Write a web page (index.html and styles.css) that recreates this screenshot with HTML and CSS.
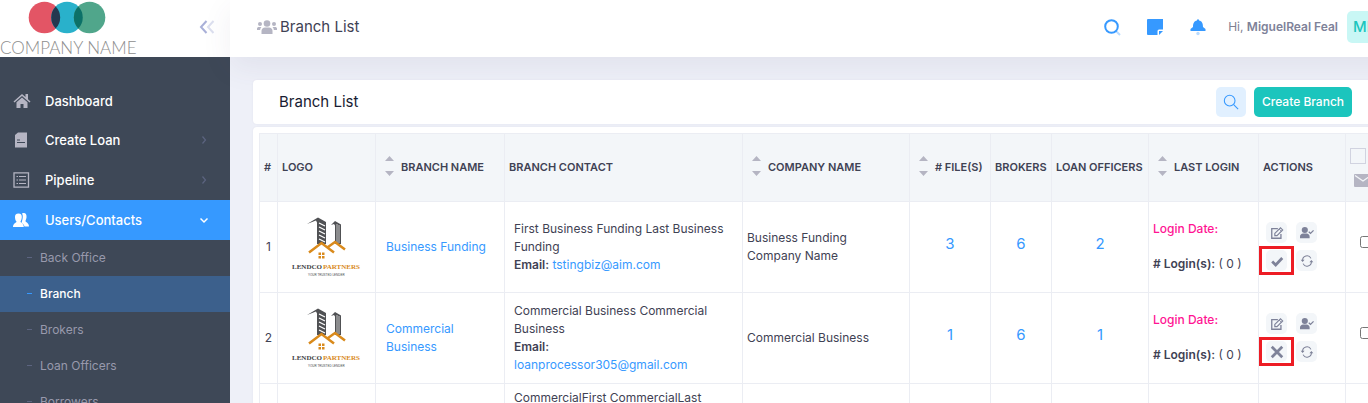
FILE: index.html
```html
<!DOCTYPE html>
<html lang="en">
<head>
<meta charset="utf-8">
<title>Branch List</title>
<link rel="stylesheet" href="styles.css">
</head>
<body>
<svg class="defs" aria-hidden="true">
  <symbol id="i-lendco" viewBox="0 0 88 80">
    <path d="M25 17 36 10.500 44 15V37H35V15.500L34 13.500Z" fill="#505154"/>
    <path d="M37 16l6 3M37 20l6 3M37 24l6 3M37 28l6 3M37 32l6 3" stroke="#fff" stroke-width="1.200"/>
    <path d="M49 18 53 14 59 17.500V37H53V18.500L52 17Z" fill="#505154"/>
    <path d="M55 17v19M57 18v18" stroke="#e6e6e6" stroke-width=".8"/>
    <path d="M27 45.500 39.500 36 52 45.500M46 40l7-5 10 7.500" fill="none" stroke="#d98a1c" stroke-width="2.500"/>
    <path d="M36.500 45.500h2.500v2.500h-2.500zM40 45.500h2.500v2.500H40zM36.500 49h2.500v2.500h-2.500zM40 49h2.500v2.500H40z" fill="#d98a1c"/>
    <text x="10" y="62" font-family="Liberation Serif, serif" font-weight="700" font-size="7" fill="#3d3e42">LENDCO<tspan dx="1" fill="#d98a1c">PARTNERS</tspan></text>
    <text x="26" y="69" font-family="Liberation Sans, sans-serif" font-size="3" fill="#44454a">YOUR TRUSTED LENDER</text>
  </symbol>
  <symbol id="i-edit" viewBox="0 0 16 16"><path d="M9 3H2v11h10.500V9" fill="none" stroke="currentColor" stroke-width="1.500"/><path d="M5.500 8.500 12 2l2.500 2.500L8 11H5.500z" fill="none" stroke="currentColor" stroke-width="1.300"/><path d="m10.500 3.500 2.500 2.500" stroke="currentColor"/></symbol>
  <symbol id="i-usercheck" viewBox="0 0 16 16"><circle cx="5.500" cy="4.500" r="3.500" fill="currentColor"/><path d="M0 14v-2c0-2 1.500-3.500 3.500-3.500h4c2 0 3.500 1.500 3.500 3.500v2z" fill="currentColor"/><path d="m10 6.500 2 2L15.500 5" fill="none" stroke="currentColor" stroke-width="1.500"/></symbol>
  <symbol id="i-check" viewBox="0 0 16 16"><path d="m2.500 8.500 4 4L14 4.500" fill="none" stroke="currentColor" stroke-width="3.200"/></symbol>
  <symbol id="i-cross" viewBox="0 0 16 16"><path d="m2 2 12 12M14 2l-12 12" fill="none" stroke="currentColor" stroke-width="3.200"/></symbol>
  <symbol id="i-sync" viewBox="0 0 16 16"><path d="M3 7.500A5 5 0 0 1 12.500 5M13 8.500A5 5 0 0 1 3.500 11" fill="none" stroke="currentColor" stroke-width="1.200"/><path d="M.8 6.500h4.400L3 9.200zM10.800 9.500h4.400L13 6.800z" fill="currentColor"/></symbol>
  <symbol id="i-sort" viewBox="0 0 9 22"><path d="M0 6 4.500 1 9 6zM0 16h9l-4.500 5z" fill="#b5b5c3"/></symbol>
  <symbol id="i-right" viewBox="0 0 8 8"><path d="m2.500.5 3 3.500-3 3.500" fill="none" stroke="currentColor" stroke-width="1.200"/></symbol>
</svg>
<div class="page">
  <aside class="sidebar">
    <div class="brand">
      <a class="brand-link" href="#">
        <svg class="brand-mark" viewBox="0 0 78 34" aria-hidden="true">
          <circle cx="16.500" cy="17.500" r="15.800" fill="#e35565"/><circle cx="39" cy="17.500" r="15.800" fill="#29b1cb"/><circle cx="61.500" cy="17.500" r="15.800" fill="#50a68b"/>
          <path d="M27.700 6.500a15.800 15.800 0 0 1 0 22 15.800 15.800 0 0 1 0-22z" fill="#24384f"/><path d="M50.300 6.500a15.800 15.800 0 0 1 0 22 15.800 15.800 0 0 1 0-22z" fill="#0c7168"/>
        </svg>
        <span class="brand-name">COMPANY NAME</span>
      </a>
      <button class="collapse" aria-label="Collapse menu"><svg viewBox="0 0 16 14"><path d="M7.500 1 2 7l5.500 6" fill="none" stroke="#a9b0d8" stroke-width="2"/><path d="M14.500 1 9 7l5.500 6" fill="none" stroke="#dcdfef" stroke-width="2"/></svg></button>
    </div>
    <nav class="menu">
      <a class="item" href="#"><svg class="item-icon" viewBox="0 0 18 16"><path d="M9 1 .5 8.500l1 1L9 3l7.500 6.500 1-1L15 6.200V1h-2.500v3zM9 4.500 3.500 9.200V15H7.500v-4h3v4h4V9.200z" fill="currentColor"/></svg><span>Dashboard</span></a>
      <a class="item" href="#"><svg class="item-icon" viewBox="0 0 18 16"><path d="M5 .5H14v15H2V3z" fill="currentColor"/><path d="M4 8h3M4 10.500h8" stroke="#3e4857"/></svg><span>Create Loan</span><svg class="arrow" viewBox="0 0 8 8"><use href="#i-right"/></svg></a>
      <a class="item" href="#"><svg class="item-icon" viewBox="0 0 18 16"><path d="M1 .8h14.500v14.400H1z" fill="none" stroke="currentColor" stroke-width="1.300"/><path d="M3.500 4.500H5M6 4.500h7M3.500 8H5M6 8h7M3.500 11.500H5M6 11.500h7" stroke="currentColor" stroke-width="1.200"/></svg><span>Pipeline</span><svg class="arrow" viewBox="0 0 8 8"><use href="#i-right"/></svg></a>
      <a class="item item-open" href="#"><svg class="item-icon" viewBox="0 0 18 16"><path d="M9 1.500C12 0 14 2 13.500 5.500c-.2 1.500-.8 2.500-1 3.500 0 1.500 3.500 1.500 3.500 5.500h-4.500c-.3-2-2-3-3-3.500C9.500 8 10.500 4 9 1.500z" fill="currentColor"/><path d="M5.500 1.500C8 1.500 9 3 8.800 5.500 8.600 7.500 8 8.500 7.500 9.500c0 1.500 3.300 1.500 3.300 5.500H0c0-4 3.500-4 3.500-5.500C2.500 8.500 2.200 7.500 2 5.500 1.800 3 3 1.500 5.500 1.500z" fill="currentColor"/></svg><span>Users/Contacts</span><svg class="arrow" viewBox="0 0 8 8"><path d="M.5 2.500 4 6l3.500-3.500" fill="none" stroke="currentColor" stroke-width="1.500"/></svg></a>
      <a class="sub" href="#">Back Office</a>
      <a class="sub sub-active" href="#">Branch</a>
      <a class="sub" href="#">Brokers</a>
      <a class="sub" href="#">Loan Officers</a>
      <a class="sub" href="#">Borrowers</a>
    </nav>
  </aside>
  <div class="content">
    <header class="topbar">
      <svg class="title-icon" viewBox="0 0 20 14"><g fill="#b5b5c3"><circle cx="10" cy="3.500" r="3.300"/><circle cx="3" cy="4" r="2"/><circle cx="17" cy="4" r="2"/><path d="M4.500 14v-3c0-2 1.500-3.500 3.500-3.500h4c2 0 3.500 1.500 3.500 3.500v3zM0 10V8.500C0 7.500 1 7 2 7h2.500C3.500 8 3.200 9 3.200 10zM20 10V8.500C20 7.500 19 7 18 7h-2.500c1 1 1.300 2 1.300 3z"/></g></svg>
      <h1 class="page-title">Branch List</h1>
      <button class="tool" aria-label="Search"><svg viewBox="0 0 18 18"><path d="m13 13 4 4" stroke="#b9dbff" stroke-width="2"/><circle cx="8.500" cy="8.500" r="6.300" fill="none" stroke="#3699ff" stroke-width="2"/></svg></button>
      <button class="tool" aria-label="Notes"><svg viewBox="0 0 18 18"><path d="M1 2Q1 1 2 1H17V11.500H13Q11.500 11.500 11.500 13V17H2Q1 17 1 16z" fill="#3699ff"/><path d="M13 13h4l-4 4z" fill="#3699ff"/></svg></button>
      <button class="tool" aria-label="Notifications"><svg viewBox="0 0 18 18"><path d="M8 1.500h2V2.500C13 3 14 5.500 14 9l2.500 2V13h-15v-2L4 9C4 5.500 5 3 8 2.500z" fill="#3699ff"/><circle cx="9" cy="15.500" r="1.700" fill="#b9dbff"/></svg></button>
      <p class="greeting">Hi, <strong>MiguelReal Feal</strong></p>
      <span class="avatar">MF</span>
    </header>
    <main class="main">
      <section class="card card-head">
        <h2 class="card-title">Branch List</h2>
        <button class="find" aria-label="Search branches"><svg viewBox="0 0 18 18"><circle cx="7.500" cy="7.500" r="6" fill="none" stroke="#3699ff" stroke-width="1.200"/><path d="m12 12 5 5" stroke="#3699ff" stroke-width="1.200"/></svg></button>
        <button class="create">Create Branch</button>
      </section>
      <section class="card card-table">
        <table class="grid">
          <colgroup><col class="c-num"><col class="c-logo"><col class="c-name"><col><col class="c-company"><col class="c-files"><col class="c-brokers"><col class="c-officers"><col class="c-login"><col class="c-actions"><col class="c-pick"></colgroup>
          <thead><tr>
            <th>#</th><th>LOGO</th>
            <th><span class="sort"><svg><use href="#i-sort"/></svg>BRANCH NAME</span></th>
            <th>BRANCH CONTACT</th>
            <th><span class="sort"><svg><use href="#i-sort"/></svg>COMPANY NAME</span></th>
            <th><span class="sort"><svg><use href="#i-sort"/></svg># FILE(S)</span></th>
            <th>BROKERS</th><th>LOAN OFFICERS</th>
            <th><span class="sort"><svg><use href="#i-sort"/></svg>LAST LOGIN</span></th>
            <th>ACTIONS</th>
            <th><span class="pick-all"><input class="box-all" type="checkbox" aria-label="Select all"><svg class="mail" viewBox="0 0 18 13"><rect width="18" height="13" rx="1" fill="#b5b5c3"/><path d="m1 1.500 8 5.500 8-5.500" fill="none" stroke="#f3f6f9" stroke-width="1.300"/></svg></span></th>
          </tr></thead>
          <tbody>
            <tr>
              <td class="num">1</td>
              <td class="logo"><svg role="img" aria-label="Lendco Partners"><use href="#i-lendco"/></svg></td>
              <td class="name"><a href="#">Business Funding</a></td>
              <td class="contact">First Business Funding Last Business Funding<br><strong>Email:</strong> <a href="#">tstingbiz@aim.com</a></td>
              <td>Business Funding<br>Company Name</td>
              <td class="count"><a href="#">3</a></td><td class="count"><a href="#">6</a></td><td class="count"><a href="#">2</a></td>
              <td><p class="login-date">Login Date:</p><p class="logins"><strong># Login(s):</strong> ( 0 )</p></td>
              <td><div class="actions"><button aria-label="Edit"><svg><use href="#i-edit"/></svg></button><button aria-label="Permissions"><svg><use href="#i-usercheck"/></svg></button><button class="marked" aria-label="Active"><svg><use href="#i-check"/></svg></button><button aria-label="Refresh"><svg><use href="#i-sync"/></svg></button></div></td>
              <td class="pick"><input type="checkbox" aria-label="Select row 1"></td>
            </tr>
            <tr>
              <td class="num">2</td>
              <td class="logo"><svg role="img" aria-label="Lendco Partners"><use href="#i-lendco"/></svg></td>
              <td class="name"><a href="#">Commercial Business</a></td>
              <td class="contact">Commercial Business Commercial Business<br><strong>Email:</strong><br><a href="#">loanprocessor305@gmail.com</a></td>
              <td>Commercial Business</td>
              <td class="count"><a href="#">1</a></td><td class="count"><a href="#">6</a></td><td class="count"><a href="#">1</a></td>
              <td><p class="login-date">Login Date:</p><p class="logins"><strong># Login(s):</strong> ( 0 )</p></td>
              <td><div class="actions"><button aria-label="Edit"><svg><use href="#i-edit"/></svg></button><button aria-label="Permissions"><svg><use href="#i-usercheck"/></svg></button><button class="marked" aria-label="Inactive"><svg><use href="#i-cross"/></svg></button><button aria-label="Refresh"><svg><use href="#i-sync"/></svg></button></div></td>
              <td class="pick"><input type="checkbox" aria-label="Select row 2"></td>
            </tr>
            <tr class="row-top">
              <td></td><td></td><td></td>
              <td class="contact">CommercialFirst CommercialLast</td>
              <td></td><td></td><td></td><td></td><td></td><td></td><td></td>
            </tr>
          </tbody>
        </table>
      </section>
    </main>
  </div>
</div>
</body>
</html>
```
FILE: styles.css
```css
* { box-sizing: border-box; }
html, body { height: 100%; }
body {
  margin: 0;
  overflow: hidden;
  background: #eef0f8;
  color: #3f4254;
  font: 400 12px/18px Inter, "Noto Sans", sans-serif;
}
h1, h2, p { margin: 0; }
a { color: #3699ff; text-decoration: none; }
button { border: 0; padding: 0; background: none; font: inherit; cursor: pointer; }
svg { display: block; flex: none; }
strong { font-weight: 600; }
.defs { display: none; }

/* The layout is slightly wider than the viewport and is clipped on the right. */
.page { display: flex; width: calc(100% + 47px); height: 100%; overflow: hidden; }

.sidebar { flex: none; width: 230px; background: #3e4857; overflow: hidden; }
.brand { display: flex; justify-content: space-between; height: 57px; padding-right: 15px; background: #fff; }
.brand-link { display: flex; flex-direction: column; }
.brand-mark { width: 78px; height: 34px; margin-left: 28px; }
.brand-name { margin-top: 4px; color: #8d8d8d; font: 300 17px/20px Lato, sans-serif; white-space: nowrap; }
.collapse { align-self: center; padding-bottom: 3px; }
.collapse svg { width: 16px; height: 14px; }
.menu { padding-top: 24px; }
.item { display: flex; align-items: center; gap: 14px; height: 40px; padding: 0 22px 0 13px; color: #b5b5c3; font-size: 13px; font-weight: 500; }
.menu .item:first-child { height: 39px; }
.item span { flex: 1; color: #fff; }
.item-icon { width: 18px; height: 16px; }
.arrow { width: 8px; height: 8px; color: #5c6480; }
.item-open { background: #3699ff; color: #fff; }
.item-open .arrow { color: #fff; }
.sub { display: flex; align-items: center; gap: 8px; height: 36px; padding: 0 0 1px 27px; color: #9899ac; }
.sub::before { content: ""; width: 5px; height: 1px; background: #5c6480; }
.sub-active { background: #3c608c; color: #fff; font-weight: 500; }
.sub-active::before { background: #3699ff; }

.content { flex: 1; min-width: 0; display: flex; flex-direction: column; }
.topbar { display: flex; align-items: center; flex: none; height: 57px; padding: 0 33px 4px 27px; background: #fff; box-shadow: 0 10px 30px rgba(82, 63, 105, 0.08); }
.title-icon { width: 20px; height: 14px; }
.page-title { flex: 1; margin-left: 3px; font-size: 15px; font-weight: 400; }
.tool { margin-right: 25px; }
.tool svg { width: 18px; height: 18px; }
.greeting { color: #80808f; margin-right: 9px; margin-left: -4px; }
.greeting strong { color: #7e8299; }
.avatar { display: flex; align-items: center; width: 35px; height: 32px; padding-left: 6px; border-radius: 5px; background: #c9f7f5; color: #1bc5bd; font-size: 15px; font-weight: 500; }

.main { padding: 23px 23px 0; }
.card { background: #fff; border-radius: 4px; box-shadow: 0 0 2px rgba(82, 63, 105, 0.08); }
.card-head { display: flex; align-items: center; height: 44px; padding: 0 40px 0 26px; margin-bottom: 3px; }
.card-title { flex: 1; color: #181c32; font-size: 15px; font-weight: 400; }
.find { display: grid; place-items: center; width: 30px; height: 30px; margin-right: 8px; border-radius: 5px; background: #e1f0ff; }
.find svg { width: 16px; height: 16px; }
.create { width: 98px; height: 30px; border-radius: 5px; background: #1bc5bd; color: #fff; font-weight: 500; }

.card-table { padding: 6px; }
.grid { width: 100%; table-layout: fixed; border-collapse: collapse; }
.grid th, .grid td { border: 1px solid #ebedf3; padding: 0 4px; text-align: left; }
.grid th { height: 68px; padding-bottom: 1px; background: #f3f6f9; font-size: 11px; font-weight: 600; white-space: nowrap; }
.grid td { height: 91px; padding-bottom: 1px; }
.c-num { width: 18px; }
.c-logo { width: 98px; }
.c-name { width: 129px; }
.c-company { width: 167px; }
.c-files { width: 81px; }
.c-brokers { width: 61px; }
.c-officers { width: 97px; }
.c-login { width: 110px; }
.c-actions { width: 87px; }
.c-pick { width: 40px; }
.sort { display: flex; align-items: center; gap: 7px; padding-left: 5px; }
.sort svg { width: 9px; height: 22px; margin-bottom: 3px; }
.pick-all { display: flex; flex-direction: column; gap: 10px; }
.box-all { appearance: none; width: 16px; height: 16px; margin: 0; border: 1px solid #d1d3e0; background: #f3f6f9; }
.mail { width: 18px; height: 13px; margin-left: 4px; }
.grid .num { text-align: center; }
.logo svg { width: 88px; height: 80px; }
.grid .name { padding: 0 10px 1px; }
.grid .contact { padding: 0 9px 1px; }
.grid .count { padding-bottom: 7px; text-align: center; font-size: 15px; }
.login-date { margin-bottom: 17px; color: #ff1493; font-weight: 500; }
.actions { display: grid; grid-template-columns: 21px 21px; gap: 7px 9px; padding-left: 3px; }
.actions button { position: relative; display: grid; place-items: center; height: 21px; border-radius: 5px; background: #f3f6f9; color: #7e8299; }
.actions svg { width: 14px; height: 14px; }
.actions .marked::after { content: ""; position: absolute; inset: -4px -7px; border: 3px solid #ed1c24; }
.grid .pick { padding-bottom: 7px; text-align: center; }
.pick input { width: 12px; height: 12px; margin: 0; }
.grid .row-top td { padding-top: 5px; vertical-align: top; }
```
